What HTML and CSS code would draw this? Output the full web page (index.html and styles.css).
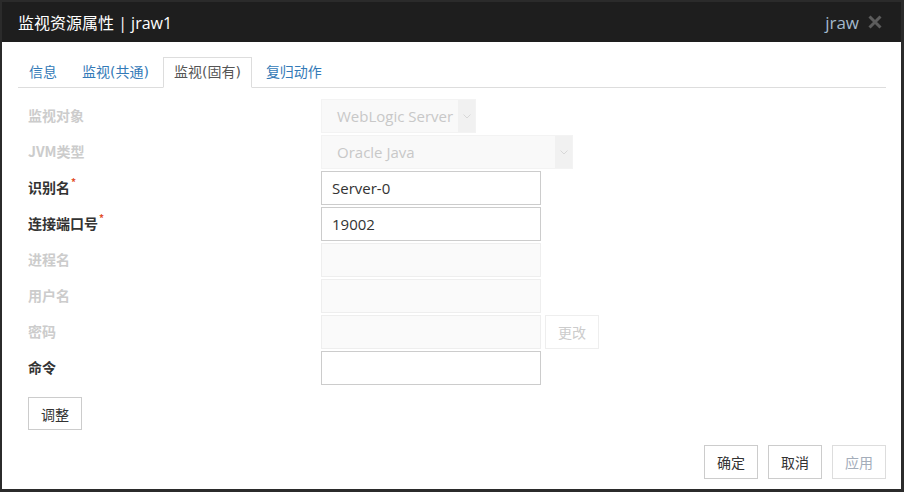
FILE: index.html
```html
<!DOCTYPE html>
<html lang="zh">
<head>
<meta charset="utf-8">
<title>监视资源属性</title>
<link rel="stylesheet" href="styles.css">
</head>
<body>
<div class="window">
  <div class="header">
    <span class="title">监视资源属性 | jraw1</span>
    <span class="user">jraw</span>
    <span class="close"><svg width="16" height="16" viewBox="0 0 16 16"><path d="M2.5 2.5 L13.5 13.5 M13.5 2.5 L2.5 13.5" stroke="#5c5c5c" stroke-width="3" fill="none"/></svg></span>
  </div>
  <div class="body">
    <ul class="tabs">
      <li class="tab">信息</li>
      <li class="tab">监视(共通)</li>
      <li class="tab active">监视(固有)</li>
      <li class="tab">复归动作</li>
    </ul>
    <div class="form">
      <div class="row">
        <span class="lbl off">监视对象</span>
        <div class="select sel-short"><span class="val">WebLogic Server</span><span class="arrow"><svg width="8" height="5" viewBox="0 0 8 5"><path d="M0.5 0.5 L4 4 L7.5 0.5" stroke="#d8d8d8" fill="none"/></svg></span></div>
      </div>
      <div class="row">
        <span class="lbl off">JVM类型</span>
        <div class="select sel-long"><span class="val">Oracle Java</span><span class="arrow"><svg width="8" height="5" viewBox="0 0 8 5"><path d="M0.5 0.5 L4 4 L7.5 0.5" stroke="#d8d8d8" fill="none"/></svg></span></div>
      </div>
      <div class="row">
        <span class="lbl">识别名<sup class="req">*</sup></span>
        <div class="input">Server-0</div>
      </div>
      <div class="row">
        <span class="lbl">连接端口号<sup class="req">*</sup></span>
        <div class="input">19002</div>
      </div>
      <div class="row">
        <span class="lbl off">进程名</span>
        <div class="input off"></div>
      </div>
      <div class="row">
        <span class="lbl off">用户名</span>
        <div class="input off"></div>
      </div>
      <div class="row">
        <span class="lbl off">密码</span>
        <div class="input off"></div>
        <button class="btn btn-off btn-change">更改</button>
      </div>
      <div class="row">
        <span class="lbl">命令</span>
        <div class="input"></div>
      </div>
    </div>
    <div class="adjust"><button class="btn">调整</button></div>
    <div class="footer">
      <button class="btn">确定</button>
      <button class="btn">取消</button>
      <button class="btn btn-apply">应用</button>
    </div>
  </div>
</div>
</body>
</html>
```

FILE: styles.css
```css
html, body {
  margin: 0;
  padding: 0;
}
body {
  width: 904px;
  height: 492px;
  overflow: hidden;
  background: #fff;
  font-family: "Open Sans", "Noto Sans CJK SC", sans-serif;
  color: #333;
}
.window {
  box-sizing: border-box;
  width: 904px;
  height: 492px;
  border-style: solid;
  border-color: #2b2b2b;
  border-width: 2px 3px 3px 2px;
  display: flex;
  flex-direction: column;
}
.header {
  flex: 0 0 40px;
  background: #1e1e1e;
  display: flex;
  align-items: center;
  padding: 0 17px 0 16px;
}
.title {
  flex: 1;
  font-size: 16px;
  color: #fff;
}
.user {
  font-size: 17px;
  color: #a3b9cc;
  margin-right: 7px;
}
.close {
  display: flex;
  width: 18px;
  justify-content: center;
}
.body {
  flex: 1;
  display: flex;
  flex-direction: column;
  padding: 15px 15px 10px 16px;
}
.tabs {
  list-style: none;
  margin: 0;
  padding: 0;
  display: flex;
  border-bottom: 1px solid #ddd;
  height: 30px;
}
.tab {
  font-family: "DejaVu Sans", "Noto Sans CJK SC", sans-serif;
  font-size: 14px;
  line-height: 29px;
  height: 29px;
  padding: 0 10px;
  margin-right: 3px;
  border: 1px solid transparent;
  color: #337ab7;
}
.tab.active {
  color: #555;
  background: #fff;
  border-color: #ddd #ddd transparent #ddd;
  border-bottom: 1px solid #fff;
}
.form {
  margin-top: 11px;
  padding-left: 10px;
}
.row {
  display: flex;
  align-items: center;
  height: 34px;
  margin-bottom: 2px;
}
.lbl {
  width: 293px;
  font-family: "Noto Sans CJK SC", sans-serif;
  font-size: 14px;
  font-weight: bold;
  color: #333;
  position: relative;
  top: -1px;
}
.lbl.off {
  color: #ccc;
}
.req {
  color: #e2502c;
  font-size: 10px;
  font-weight: bold;
  vertical-align: top;
  position: relative;
  top: -3px;
  margin-left: 1px;
}
.input {
  box-sizing: border-box;
  width: 220px;
  height: 34px;
  border: 1px solid #ccc;
  padding: 0 10px;
  font-size: 15px;
  line-height: 32px;
  color: #333;
  background: #fff;
}
.input.off {
  background: #fafafa;
  border-color: #eee;
}
.select {
  box-sizing: border-box;
  height: 34px;
  display: flex;
  background: #f9f9f9;
  border: 1px solid #f3f3f3;
}
.sel-short { width: 155px; }
.sel-long { width: 252px; }
.select .val {
  flex: 1;
  padding-left: 15px;
  font-size: 15px;
  line-height: 32px;
  color: #c8c8c8;
}
.select .arrow {
  width: 17px;
  background: #f1f1f1;
  display: flex;
  align-items: center;
  justify-content: center;
}
.btn {
  box-sizing: border-box;
  width: 54px;
  height: 34px;
  padding: 0;
  border: 1px solid #ccc;
  background: #fff;
  font-family: "Noto Sans CJK SC", sans-serif;
  font-size: 14px;
  color: #333;
}
.btn-off {
  border-color: #eee;
  color: #ccc;
}
.btn-change {
  margin-left: 4px;
}
.adjust {
  margin-top: 10px;
  padding-left: 10px;
}
.adjust .btn {
  height: 33px;
}
.footer {
  margin-top: auto;
  display: flex;
  justify-content: flex-end;
  gap: 10px;
}
.btn-apply {
  border-color: #ddd;
  color: #a4adba;
}
```
